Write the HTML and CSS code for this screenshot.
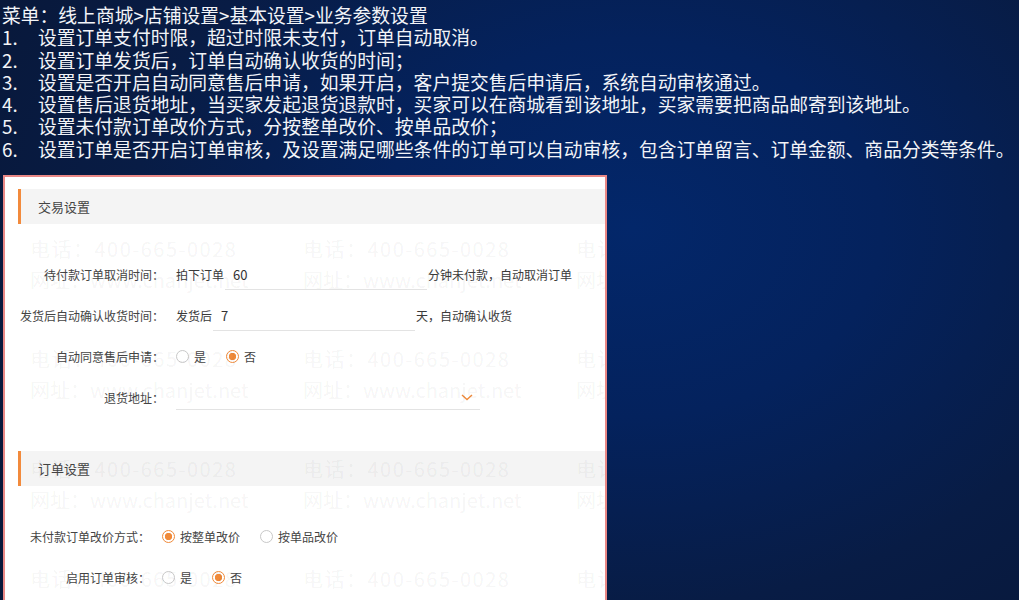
FILE: index.html
```html
<!DOCTYPE html>
<html lang="zh-CN">
<head>
    <meta charset="UTF-8">
    <meta name="viewport" content="width=device-width, initial-scale=1.0">
    <title>业务参数设置</title>
    <link rel="stylesheet" href="styles.css">
</head>
<body>
    <div class="intro">
        <p class="menu-path">菜单：线上商城&gt;店铺设置&gt;基本设置&gt;业务参数设置</p>
        <ol class="steps">
            <li><span class="num">1.</span><span>设置订单支付时限，超过时限未支付，订单自动取消。</span></li>
            <li><span class="num">2.</span><span>设置订单发货后，订单自动确认收货的时间；</span></li>
            <li><span class="num">3.</span><span>设置是否开启自动同意售后申请，如果开启，客户提交售后申请后，系统自动审核通过。</span></li>
            <li><span class="num">4.</span><span>设置售后退货地址，当买家发起退货退款时，买家可以在商城看到该地址，买家需要把商品邮寄到该地址。</span></li>
            <li><span class="num">5.</span><span>设置未付款订单改价方式，分按整单改价、按单品改价；</span></li>
            <li><span class="num">6.</span><span>设置订单是否开启订单审核，及设置满足哪些条件的订单可以自动审核，包含订单留言、订单金额、商品分类等条件。</span></li>
        </ol>
    </div>

    <div class="shot">
        <!-- 水印 -->
        <div class="watermark">
            <div class="wm"><span class="tel">电话：400-665-0028</span><span>网址：www.chanjet.net</span></div>
            <div class="wm"><span class="tel">电话：400-665-0028</span><span>网址：www.chanjet.net</span></div>
            <div class="wm"><span class="tel">电话：400-665-0028</span><span>网址：www.chanjet.net</span></div>
            <div class="wm"><span class="tel">电话：400-665-0028</span><span>网址：www.chanjet.net</span></div>
            <div class="wm"><span class="tel">电话：400-665-0028</span><span>网址：www.chanjet.net</span></div>
            <div class="wm"><span class="tel">电话：400-665-0028</span><span>网址：www.chanjet.net</span></div>
            <div class="wm"><span class="tel">电话：400-665-0028</span><span>网址：www.chanjet.net</span></div>
            <div class="wm"><span class="tel">电话：400-665-0028</span><span>网址：www.chanjet.net</span></div>
            <div class="wm"><span class="tel">电话：400-665-0028</span><span>网址：www.chanjet.net</span></div>
            <div class="wm"><span class="tel">电话：400-665-0028</span><span>网址：www.chanjet.net</span></div>
            <div class="wm"><span class="tel">电话：400-665-0028</span><span>网址：www.chanjet.net</span></div>
            <div class="wm"><span class="tel">电话：400-665-0028</span><span>网址：www.chanjet.net</span></div>
        </div>

        <div class="section-title">交易设置</div>
        <div class="form trade">
            <div class="row">
                <span class="label">待付款订单取消时间：</span>
                <span class="field">拍下订单<input class="line-input" type="text" value="60">分钟未付款，自动取消订单</span>
            </div>
            <div class="row">
                <span class="label">发货后自动确认收货时间：</span>
                <span class="field">发货后<input class="line-input" type="text" value="7">天，自动确认收货</span>
            </div>
            <div class="row">
                <span class="label">自动同意售后申请：</span>
                <span class="radio">是</span>
                <span class="radio on">否</span>
            </div>
            <div class="row">
                <span class="label">退货地址：</span>
                <span class="select">
                    <svg class="chevron" width="12" height="7" viewBox="0 0 12 7"><path d="M1 1 L6 5.5 L11 1" fill="none" stroke="#f08a3a" stroke-width="1.4"/></svg>
                </span>
            </div>
        </div>

        <div class="section-title second">订单设置</div>
        <div class="form order">
            <div class="row">
                <span class="label">未付款订单改价方式：</span>
                <span class="radio on">按整单改价</span>
                <span class="radio">按单品改价</span>
            </div>
            <div class="row">
                <span class="label">启用订单审核：</span>
                <span class="radio">是</span>
                <span class="radio on">否</span>
            </div>
        </div>
    </div>
</body>
</html>
```

FILE: styles.css
```css
html, body {
    margin: 0;
    height: 100%;
    overflow: hidden;
}
body {
    font-family: "Noto Sans CJK SC", "Noto Sans", sans-serif;
    color: #f2f4f8;
    background: radial-gradient(ellipse 70% 90% at 62% 38%, #03276a 0%, #04225d 35%, #081c45 70%, #08183a 100%);
}
.intro {
    padding: 4px 0 0 2px;
    font-size: 18.8px;
    line-height: 22.3px;
    white-space: nowrap;
}
.menu-path, .steps {
    margin: 0;
    padding: 0;
    list-style: none;
}
.steps li {
    display: flex;
}
.num {
    width: 36px;
    flex-shrink: 0;
}

/* 截图区域 */
.shot {
    position: relative;
    margin: 15px 0 0 3px;
    width: 600px;
    height: 440px;
    padding-top: 12px;
    border: 2px solid #e98886;
    background: #fff;
    color: #3a3a3a;
    font-size: 12px;
    overflow: hidden;
}
.watermark {
    position: absolute;
    left: 25px;
    top: 56px;
    z-index: 1;
    display: grid;
    grid-template-columns: repeat(3, 273px);
    grid-auto-rows: 110px;
    color: rgba(0, 0, 0, 0.055);
    font-size: 20px;
    line-height: 31px;
    white-space: nowrap;
    pointer-events: none;
}
.wm span {
    display: block;
}
.wm .tel {
    letter-spacing: 1.5px;
}
.section-title {
    margin-left: 13px;
    height: 35px;
    line-height: 35px;
    padding-left: 17px;
    background: #f4f4f4;
    border-left: 3px solid #f28a3c;
    font-size: 13px;
    color: #444;
}
.section-title.second {
    margin-top: 33px;
}
.form {
    padding-top: 30px;
}
.row {
    display: flex;
    align-items: center;
    height: 41px;
}
.label {
    width: 159px;
    margin-right: 12px;
    flex-shrink: 0;
    text-align: right;
    color: #444;
}
.order .label {
    width: 145px;
}
.field {
    display: flex;
    align-items: center;
}
.line-input {
    width: 202px;
    height: 30px;
    margin: 0 1px;
    padding: 0 8px;
    box-sizing: border-box;
    border: none;
    border-bottom: 1px solid #e3e3e3;
    background: transparent;
    font-family: inherit;
    font-size: 13px;
    color: #333;
    outline: none;
}
.select {
    display: flex;
    align-items: center;
    justify-content: flex-end;
    width: 304px;
    height: 24px;
    margin-top: 1px;
    padding-right: 7px;
    box-sizing: border-box;
    border-bottom: 1px solid #e3e3e3;
}
.radio {
    display: inline-flex;
    align-items: center;
    margin-right: 20px;
    color: #444;
}
.radio::before {
    content: "";
    width: 13px;
    height: 13px;
    margin-right: 5px;
    box-sizing: border-box;
    border: 1px solid #c8c8c8;
    border-radius: 50%;
    background: #fff;
}
.radio.on::before {
    border-color: #f08a3a;
    background: radial-gradient(circle, #f08a3a 0 3.4px, #fff 4px);
}
```
